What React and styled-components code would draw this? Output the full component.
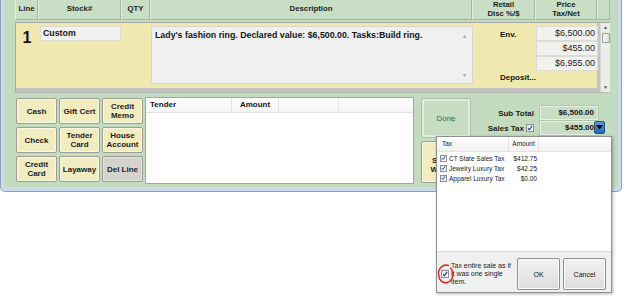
import React from "react";
import styled, { createGlobalStyle } from "styled-components";

const Global = createGlobalStyle`
  html, body { margin: 0; padding: 0; background: #fff; }
  body { font-family: "Liberation Sans", Arial, sans-serif; color: #151515; }
`;

const Stage = styled.div`
  position: relative;
  width: 624px;
  height: 296px;
  overflow: hidden;
  background: #fff;
`;

const Window = styled.div`
  box-sizing: border-box;
  width: 622px;
  height: 192px;
  background: #c3dbbf;
  border: 1px solid #8c9fb3;
  border-top: none;
  border-radius: 0 0 5px 5px;
  box-shadow: inset 3px 0 0 #cddcec, inset -3px 0 0 #cddcec, inset 0 -4px 0 #cddcec;
  padding: 0 11px 7px 14px;
  display: flex;
  flex-direction: column;
`;

const cols = "22px 83px 29px 322px 63px 62px";

const HeaderRow = styled.div`
  display: grid;
  grid-template-columns: 23px 83px 29px 322px 63px 62px 13px;
  height: 20px;
`;

const HeadCell = styled.div`
  box-sizing: border-box;
  display: flex;
  align-items: center;
  justify-content: center;
  text-align: center;
  background: #c9dfc5;
  border-left: 1px solid #e3eee1;
  border-right: 1px solid #a3b8a0;
  border-bottom: 1px solid #a3b8a0;
  font-size: 7.8px;
  font-weight: bold;
  line-height: 8.5px;
  color: #1e1e1e;
`;

const ItemList = styled.div`
  box-sizing: border-box;
  margin-top: 2px;
  height: 71px;
  display: flex;
  background: #c4c4c2;
  border-top: 1px solid #a8a8a4;
  border-left: 1px solid #a8a8a4;
  border-bottom: 1px solid #b8b8b4;
`;

const ItemRow = styled.div`
  box-sizing: border-box;
  display: grid;
  grid-template-columns: ${cols};
  align-items: start;
  height: 65px;
  padding-top: 3px;
  background: #efe9b0;
`;

const LineNo = styled.div`
  font-size: 16px;
  font-weight: bold;
  text-align: center;
  line-height: 16px;
  padding-top: 4px;
`;

const Field = styled.div`
  box-sizing: border-box;
  background: #f1f1ef;
  border: 1px solid #dcdcd2;
  font-size: 8.8px;
  font-weight: bold;
  line-height: 13px;
  height: 15px;
  margin-left: ${(p) => p.$ml || 0}px;
  padding: 0 2px;
  white-space: nowrap;
`;

const Desc = styled.div`
  box-sizing: border-box;
  position: relative;
  width: 322px;
  height: 58px;
  margin-left: 1px;
  background: #f0f0f0;
  border: 1px solid #d6d6d0;
  font-size: 8.8px;
  font-weight: bold;
  line-height: 10px;
  padding: 3px 3px;
  white-space: nowrap;
`;

const MiniArrow = styled.span`
  position: absolute;
  right: 5px;
  font-size: 5px;
  color: #a0a0a0;
  ${(p) => (p.$down ? "bottom: 3px;" : "top: 4px;")}
`;

const RetailCol = styled.div`
  display: flex;
  flex-direction: column;
  justify-content: space-between;
  height: 58px;
  padding: 4px 0 2px 28px;
  box-sizing: border-box;
  font-size: 8px;
  font-weight: bold;
`;

const PriceCol = styled.div`
  display: flex;
  flex-direction: column;
  margin-left: 1px;
  width: 62px;
`;

const PriceBox = styled(Field)`
  font-weight: normal;
  font-size: 9px;
  text-align: right;
  height: 15px;
  color: #222;
`;

const Scroll = styled.div`
  box-sizing: border-box;
  margin-left: 3px;
  width: 10px;
  height: 69px;
  background: #ecece8;
  border-left: 1px solid #d6d6d2;
  display: flex;
  flex-direction: column;
  align-items: center;
  font-size: 5px;
  color: #555;
`;

const ScrollArrow = styled.div`
  height: 9px;
  line-height: 9px;
`;

const ScrollTrack = styled.div`
  flex: 1;
`;

const Thumb = styled.div`
  box-sizing: border-box;
  width: 8px;
  height: 10px;
  margin-top: 1px;
  background: linear-gradient(90deg, #f6f6f6, #dedede);
  border: 1px solid #9a9a9a;
  border-radius: 1px;
`;

const Bottom = styled.div`
  display: flex;
  margin-top: 4px;
  height: 87px;
`;

const ButtonGrid = styled.div`
  display: grid;
  grid-template-columns: repeat(3, 41px);
  grid-auto-rows: 26px;
  column-gap: 2px;
  row-gap: 3px;
  margin: 1px 0 0 1px;
`;

const PadButton = styled.div`
  box-sizing: border-box;
  display: flex;
  align-items: center;
  justify-content: center;
  text-align: center;
  background: ${(p) => (p.$gray ? "#d4d3cd" : "#f1edc0")};
  border: 1px solid #9d9d95;
  border-radius: 2px;
  box-shadow: inset 0 0 0 1px ${(p) => (p.$gray ? "#e4e3de" : "#faf7e2")};
  font-size: 8px;
  font-weight: bold;
  line-height: 9px;
  color: #1c1c1c;
`;

const Tender = styled.div`
  box-sizing: border-box;
  width: 269px;
  height: 87px;
  margin-left: 2px;
  background: #fff;
  border: 1px solid #a4a4a4;
`;

const TenderHead = styled.div`
  display: grid;
  grid-template-columns: 86px 47px 60px 1fr;
  height: 14px;
  background: linear-gradient(#ffffff, #f4f4f4);
  border-bottom: 1px solid #e2e2e2;
`;

const TenderCell = styled.div`
  box-sizing: border-box;
  border-right: 1px solid #e4e4e4;
  font-size: 8px;
  font-weight: bold;
  line-height: 14px;
  padding-left: ${(p) => (p.$center ? 0 : 4)}px;
  text-align: ${(p) => (p.$center ? "center" : "left")};
  &:last-child { border-right: none; }
`;

const RightPanel = styled.div`
  display: flex;
  padding-left: 7px;
`;

const ActionCol = styled.div`
  display: flex;
  flex-direction: column;
  gap: 3px;
  width: 50px;
  padding-top: 1px;
`;

const DoneButton = styled.div`
  box-sizing: border-box;
  height: 40px;
  display: flex;
  align-items: center;
  justify-content: center;
  background: #c6ddc2;
  border: 1px solid #a9bea6;
  box-shadow: inset 0 0 0 2px #e2ede0;
  border-radius: 2px;
  font-size: 8px;
  color: #3c6b3c;
`;

const TallButton = styled(PadButton)`
  height: 42px;
  padding-top: 5px;
`;

const Totals = styled.div`
  display: grid;
  grid-template-columns: 63px 58px 11px;
  grid-auto-rows: 14px;
  row-gap: 1px;
  margin-top: 9px;
  align-content: start;
`;

const TotLabel = styled.div`
  display: flex;
  align-items: center;
  justify-content: flex-end;
  gap: 2px;
  font-size: 8px;
  font-weight: bold;
  color: #1c1c1c;
  white-space: nowrap;
`;

const TotBox = styled.div`
  box-sizing: border-box;
  margin-left: 6px;
  width: 58px;
  background: #c8dec4;
  border: 1px solid #e8f0e6;
  box-shadow: 0 0 0 1px #b2c6ae;
  font-size: 8px;
  font-weight: bold;
  text-align: right;
  line-height: 12px;
  padding-right: 3px;
`;

const Spacer = styled.div``;

const DropBtn = styled.div`
  box-sizing: border-box;
  margin-left: 2px;
  width: 11px;
  height: 13px;
  background: linear-gradient(#5e9ad6, #2466ad);
  border: 1px solid #20507f;
  border-radius: 2px;
  display: flex;
  align-items: center;
  justify-content: center;
`;

const Popup = styled.div`
  position: absolute;
  left: 436px;
  top: 136px;
  width: 176px;
  height: 157px;
  box-sizing: border-box;
  background: #fff;
  border: 1px solid #8f8f8f;
  box-shadow: 1px 1px 3px rgba(0, 0, 0, 0.3);
  display: flex;
  flex-direction: column;
  font-size: 6.5px;
  color: #222;
`;

const PopList = styled.div`
  height: 114px;
  border-bottom: 1px solid #d8d8d8;
`;

const PopHead = styled.div`
  display: grid;
  grid-template-columns: 72px 30px 1fr;
  height: 14px;
  background: linear-gradient(#ffffff, #f2f2f2);
  border-bottom: 1px solid #e3e3e3;
  margin-bottom: 1px;
`;

const PopHeadCell = styled.div`
  box-sizing: border-box;
  border-right: 1px solid #e3e3e3;
  line-height: 14px;
  padding-left: ${(p) => (p.$center ? 0 : 5)}px;
  text-align: ${(p) => (p.$center ? "center" : "left")};
  &:last-child { border-right: none; }
`;

const TaxRow = styled.div`
  display: grid;
  grid-template-columns: 72px 30px;
  height: 10px;
  align-items: center;
`;

const TaxName = styled.div`
  display: flex;
  align-items: center;
  gap: 2px;
  padding-left: 3px;
  white-space: nowrap;
`;

const TaxAmt = styled.div`
  text-align: right;
  padding-right: 2px;
`;

const CheckBoxEl = styled.span`
  box-sizing: border-box;
  display: inline-flex;
  align-items: center;
  justify-content: center;
  width: ${(p) => p.$size || 7}px;
  height: ${(p) => p.$size || 7}px;
  flex: none;
  background: linear-gradient(135deg, #dde7f3, #ffffff);
  border: 1px solid #8a8f99;
`;

const PopFoot = styled.div`
  position: relative;
  flex: 1;
  display: flex;
  align-items: flex-start;
  background: #f0f0f0;
  padding: 6px 0 0 4px;
`;

const Option = styled.div`
  display: flex;
  align-items: center;
  height: 32px;
  width: 74px;
  gap: 2px;
`;

const OptionText = styled.div`
  font-size: 7px;
  line-height: 8.3px;
  width: 62px;
  color: #222;
`;

const DlgButton = styled.div`
  box-sizing: border-box;
  width: 43px;
  height: 32px;
  margin-left: ${(p) => p.$ml || 0}px;
  display: flex;
  align-items: center;
  justify-content: center;
  background: linear-gradient(#f2f2f2, #dcdcdc);
  border: 1px solid #8e8e8e;
  border-radius: 2px;
  box-shadow: inset 0 0 0 1px #fafafa;
  font-size: 7px;
  color: #111;
`;

const RedMark = styled.svg`
  position: absolute;
  left: 0px;
  top: 11px;
`;

function Check({ size }) {
  return (
    <CheckBoxEl $size={size}>
      <svg width="6" height="6" viewBox="0 0 6 6">
        <path d="M1 3.2 L2.4 4.8 L5 0.9" fill="none" stroke="#1f3f8f" strokeWidth="1.1" />
      </svg>
    </CheckBoxEl>
  );
}

const taxes = [
  ["CT State Sales Tax", "$412.75"],
  ["Jewelry Luxury Tax", "$42.25"],
  ["Apparel Luxury Tax", "$0.00"],
];

export default function App() {
  return (
    <Stage>
      <Global />
      <Window>
        <HeaderRow>
          <HeadCell>Line</HeadCell>
          <HeadCell>Stock#</HeadCell>
          <HeadCell>QTY</HeadCell>
          <HeadCell>Description</HeadCell>
          <HeadCell>Retail<br />Disc %/$</HeadCell>
          <HeadCell>Price<br />Tax/Net</HeadCell>
          <HeadCell />
        </HeaderRow>
        <ItemList>
          <ItemRow>
            <LineNo>1</LineNo>
            <Field $ml={2}>Custom</Field>
            <Spacer />
            <Desc>
              Lady's fashion ring. Declared value: $6,500.00. Tasks:Build ring.
              <MiniArrow>▲</MiniArrow>
              <MiniArrow $down>▼</MiniArrow>
            </Desc>
            <RetailCol>
              <span>Env.</span>
              <span>Deposit...</span>
            </RetailCol>
            <PriceCol>
              <PriceBox>$6,500.00</PriceBox>
              <PriceBox>$455.00</PriceBox>
              <PriceBox>$6,955.00</PriceBox>
            </PriceCol>
          </ItemRow>
          <Scroll>
            <ScrollArrow>▲</ScrollArrow>
            <Thumb />
            <ScrollTrack />
            <ScrollArrow>▼</ScrollArrow>
          </Scroll>
        </ItemList>
        <Bottom>
          <ButtonGrid>
            <PadButton>Cash</PadButton>
            <PadButton>Gift Cert</PadButton>
            <PadButton>Credit<br />Memo</PadButton>
            <PadButton>Check</PadButton>
            <PadButton>Tender<br />Card</PadButton>
            <PadButton>House<br />Account</PadButton>
            <PadButton>Credit<br />Card</PadButton>
            <PadButton>Layaway</PadButton>
            <PadButton $gray>Del Line</PadButton>
          </ButtonGrid>
          <Tender>
            <TenderHead>
              <TenderCell>Tender</TenderCell>
              <TenderCell $center>Amount</TenderCell>
              <TenderCell />
              <TenderCell />
            </TenderHead>
          </Tender>
          <RightPanel>
            <ActionCol>
              <DoneButton>Done</DoneButton>
              <TallButton>Special<br />Will Call</TallButton>
            </ActionCol>
            <Totals>
              <TotLabel>Sub Total</TotLabel>
              <TotBox>$6,500.00</TotBox>
              <Spacer />
              <TotLabel>
                Sales Tax <Check size={8} />
              </TotLabel>
              <TotBox>$455.00</TotBox>
              <DropBtn>
                <svg width="7" height="5" viewBox="0 0 7 5">
                  <path d="M0 0 H7 L3.5 4.5 Z" fill="#000" />
                </svg>
              </DropBtn>
            </Totals>
          </RightPanel>
        </Bottom>
      </Window>

      <Popup>
        <PopList>
          <PopHead>
            <PopHeadCell>Tax</PopHeadCell>
            <PopHeadCell $center>Amount</PopHeadCell>
            <PopHeadCell />
          </PopHead>
          {taxes.map(([n, a]) => (
            <TaxRow key={n}>
              <TaxName>
                <Check />
                {n}
              </TaxName>
              <TaxAmt>{a}</TaxAmt>
            </TaxRow>
          ))}
        </PopList>
        <PopFoot>
          <Option>
            <Check size={8} />
            <OptionText>Tax entire sale as if it was one single item.</OptionText>
          </Option>
          <DlgButton $ml={2}>OK</DlgButton>
          <DlgButton $ml={3}>Cancel</DlgButton>
          <RedMark width="18" height="22" viewBox="0 0 18 22">
            <path
              d="M12 2.5 C6 0.5 1.2 5 1.5 11.5 C1.8 17.5 6 20.5 10 19.5 C14.5 18.5 16.5 14 15.8 9.5 C15.4 7 14.4 5.5 13 4.5"
              fill="none"
              stroke="#e01b1b"
              strokeWidth="1.4"
            />
          </RedMark>
        </PopFoot>
      </Popup>
    </Stage>
  );
}
